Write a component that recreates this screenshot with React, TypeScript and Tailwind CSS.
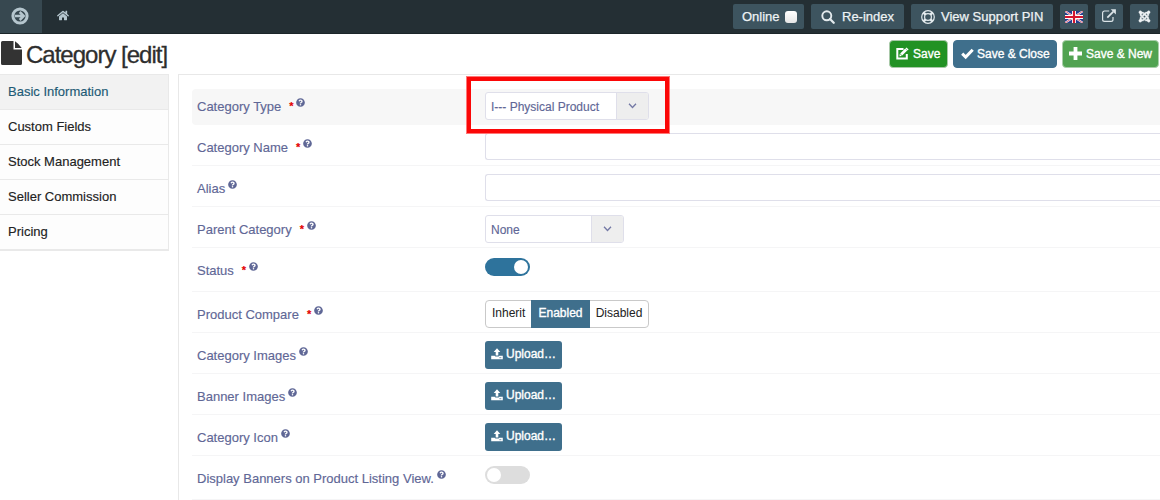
import type { ReactNode } from "react";
import { FaHome, FaJoomla, FaQuestionCircle } from "react-icons/fa";

function ArrowCircleIcon() {
  return (
    <svg className="h-[18px] w-[18px]" viewBox="0 0 18 18" fill="none" stroke="#b5c6ce" aria-hidden>
      <circle cx="9" cy="9" r="7.1" strokeWidth="3" />
      <path d="M4 9h8.500M8.700 5 12.700 9 8.700 13" strokeWidth="2.500" />
    </svg>
  );
}

function FileIcon() {
  return (
    <svg className="mt-[7px] ml-[1px] h-[24px] w-[21px]" viewBox="0 0 21 24" fill="#333" aria-hidden>
      <path d="M1.500 0H12.500V8.500H21V22.500Q21 24 19.500 24H1.500Q0 24 0 22.500V1.500Q0 0 1.500 0Z" />
      <path d="M14 .3Q17.500 2.500 20.700 7H14z" />
    </svg>
  );
}

function SearchIcon() {
  return (
    <svg className="h-[14px] w-[14px]" viewBox="0 0 14 14" fill="none" stroke="#e3eaed" aria-hidden>
      <circle cx="5.800" cy="5.800" r="4.500" strokeWidth="1.900" />
      <path d="m9 9 3.700 3.700" strokeWidth="2.300" strokeLinecap="round" />
    </svg>
  );
}

function LifeRingIcon() {
  return (
    <svg className="h-[14px] w-[14px]" viewBox="0 0 14 14" fill="none" stroke="#e3eaed" aria-hidden>
      <circle cx="7" cy="7" r="6.300" strokeWidth="1.200" />
      <circle cx="7" cy="7" r="3.400" strokeWidth="1.200" />
      <path d="m2.600 2.600 2 2M11.400 2.600l-2 2M2.600 11.400l2-2M11.400 11.400l-2-2" strokeWidth="2.600" />
    </svg>
  );
}

function CheckIcon() {
  return (
    <svg className="h-[12px] w-[13px]" viewBox="0 0 13 12" fill="none" stroke="white" aria-hidden>
      <path d="m1.200 5.600 3.500 3.500 7-7.300" strokeWidth="3" />
    </svg>
  );
}

function PlusIcon() {
  return (
    <svg className="h-[13px] w-[13px]" viewBox="0 0 13 13" fill="none" stroke="white" aria-hidden>
      <path d="M6.500 0v13M0 6.500h13" strokeWidth="3.800" />
    </svg>
  );
}

function EditIcon() {
  return (
    <svg className="h-[13px] w-[13px]" viewBox="0 0 13 13" fill="none" stroke="white" aria-hidden>
      <path d="M7.500 2H1.300v9.500h9.500V7" strokeWidth="2" />
      <path d="m5.200 7.600 5-5" strokeWidth="2.800" />
      <path d="m10.500.4 2.100 2.100-1 1-2.100-2.100zM3.800 6.800 3.400 9.300l2.500-.4z" fill="white" stroke="none" />
    </svg>
  );
}

function ExternalIcon() {
  return (
    <svg className="h-[14px] w-[14px]" viewBox="0 0 14 14" fill="none" stroke="#dce4e8" aria-hidden>
      <path d="M7.200 2H2.500A1.900 1.900 0 0 0 .6 3.900v6.600a1.900 1.900 0 0 0 1.900 1.900h6.600a1.900 1.900 0 0 0 1.900-1.900V8" strokeWidth="1.200" />
      <path d="m5.300 8.700 6-6" strokeWidth="1.800" />
      <path d="M8.700.3H13.900V5.500z" fill="#dce4e8" stroke="none" />
    </svg>
  );
}

function UploadIcon() {
  return (
    <svg className="h-[12px] w-[12px]" viewBox="0 0 12 12" fill="white" aria-hidden>
      <path d="M6 .2 9.300 3.900H7.300V7.400H4.700V3.900H2.700z" />
      <path d="M.2 7.800h3.500l.7.800h3.200l.7-.8h3.500v3.400H.2z" />
      <path d="M8.300 9.700h2" stroke="#3f6f8c" strokeWidth=".7" />
    </svg>
  );
}

function FlagIcon() {
  return (
    <svg className="h-[12px] w-[18px]" viewBox="0 0 18 12" aria-hidden>
      <path d="M0 0h18v12H0z" fill="#243c8d" />
      <path d="m0 0 18 12M18 0 0 12" stroke="#f3f3f8" strokeWidth="1.900" />
      <path d="m0 0 18 12M18 0 0 12" stroke="#d5273e" strokeWidth=".7" />
      <path d="M9 0v12M0 6h18" stroke="white" strokeWidth="4" />
      <path d="M9 0v12M0 6h18" stroke="#d5152e" strokeWidth="2.200" />
    </svg>
  );
}

function Chevron() {
  return (
    <svg className="h-[6px] w-[9px]" viewBox="0 0 9 6" fill="none" stroke="#7479a5" strokeWidth="1.300" aria-hidden>
      <path d="m1 .8 3.500 3.700L8 .8" />
    </svg>
  );
}

function TopButton({ className, children }: { className: string; children: ReactNode }) {
  return (
    <button className={`flex h-[25px] shrink-0 items-center rounded-[2px] bg-[#3d545f] text-[#eef2f4] [-webkit-text-stroke:0.25px_currentColor] ${className}`}>
      {children}
    </button>
  );
}

function ActionButton({ className, children }: { className: string; children: ReactNode }) {
  return (
    <button className={`flex h-[28px] shrink-0 items-center rounded-[4px] border pb-px text-xs text-white [-webkit-text-stroke:0.35px_white] ${className}`}>
      {children}
    </button>
  );
}

function Row({ label, required, tall, first, children }: {
  label: string;
  required?: boolean;
  tall?: boolean;
  first?: boolean;
  children: ReactNode;
}) {
  const box = first ? "h-9 rounded-l-[4px] bg-[#f7f7f7] pt-[3px]" : tall ? "h-11 border-b border-[#f5f5f6] pt-2" : "h-[41px] border-b border-[#f5f5f6] pt-2";
  return (
    <div className={`flex shrink-0 items-start pl-[5px] ${box}`}>
      <div className="flex h-[29px] w-[288px] shrink-0 items-center whitespace-nowrap text-[13px] text-[#5f6796] [-webkit-text-stroke:0.15px_currentColor]">
        <span>{label}</span>
        {required && <span className="ml-[8px] w-[5px] text-[11px] leading-none font-bold text-[#e30000]">*</span>}
        <FaQuestionCircle className={`mb-[8px] h-[9px] w-[9px] ${required ? "ml-[2px]" : "ml-[3px]"}`} />
      </div>
      {children}
    </div>
  );
}

function Select({ value, className }: { value: string; className: string }) {
  return (
    <div className={`flex h-[28px] overflow-hidden rounded-[3px] border border-[#dfdfea] bg-white text-xs text-[#5f6796] [-webkit-text-stroke:0.15px_currentColor] ${className}`}>
      <span className="flex flex-1 items-center pt-px pl-[5px]">{value}</span>
      <span className="flex w-[32px] items-center justify-center border-l border-[#dfdfea] bg-[#eee]"><Chevron /></span>
    </div>
  );
}

function TextInput() {
  return <input className="h-[27px] min-w-0 flex-1 rounded-l-[3px] border border-r-0 border-[#dfdfea] bg-white px-2 text-xs" />;
}

function Upload() {
  return (
    <button className="flex h-[28px] w-[77px] items-center gap-[3px] rounded-[3px] bg-[#3f6f8c] pb-[2px] pl-[6px] text-xs text-white [-webkit-text-stroke:0.35px_white]">
      <UploadIcon />
      Upload…
    </button>
  );
}

const tabs = ["Custom Fields", "Stock Management", "Seller Commission", "Pricing"];

export default function App() {
  return (
    <div className="relative flex h-[500px] w-[1160px] flex-col overflow-hidden bg-white font-['Liberation_Sans',Arial,sans-serif] text-[13px] text-[#222]">
      <header className="flex h-[34px] shrink-0 items-start border-b border-[#1b2529] bg-[#242f34]">
        <div className="flex h-[33px] w-[42px] items-center justify-center bg-[#374850] pr-[3px] pb-[2px]">
          <ArrowCircleIcon />
        </div>
        <FaHome className="mt-[10px] ml-[15px] h-[11px] w-[12px] text-[#b5c6ce]" />
        <div className="mt-1 ml-auto flex gap-[7px] pr-[2px]">
          <TopButton className="w-[71px] gap-[5px] pl-[9px]">
            Online
            <span className="h-[12px] w-[12px] rounded-[3px] bg-gradient-to-b from-white to-[#e6e6e6]" />
          </TopButton>
          <TopButton className="w-[93px] gap-[7px] pl-[10px]">
            <SearchIcon />
            Re-index
          </TopButton>
          <TopButton className="w-[142px] gap-[6px] pl-[10px]">
            <LifeRingIcon />
            View Support PIN
          </TopButton>
          <TopButton className="w-[28px] justify-center pt-[1px]"><FlagIcon /></TopButton>
          <TopButton className="w-[28px] justify-center pb-[2px]"><ExternalIcon /></TopButton>
          <TopButton className="w-[28px] justify-center"><FaJoomla className="h-[13px] w-[13px]" stroke="#eef2f4" strokeWidth="14" /></TopButton>
        </div>
      </header>

      <div className="flex h-[40px] shrink-0 items-start">
        <FileIcon />
        <h1 className="mt-[3px] ml-[4px] text-[24px] leading-[36px] tracking-[-1px] text-[#2e2e2e] [-webkit-text-stroke:0.3px_currentColor]">Category [edit]</h1>
        <div className="mt-[6px] ml-auto flex gap-[5px] pr-px">
          <ActionButton className="w-[59px] gap-[4px] border-[#a9c9a9] bg-[#229224] pl-[6px]"><EditIcon />Save</ActionButton>
          <ActionButton className="w-[104px] gap-[3px] border-[#3f6f8c] bg-[#3f6f8c] pl-[7px]"><CheckIcon />Save &amp; Close</ActionButton>
          <ActionButton className="w-[97px] gap-[4px] border-[#a9cfaa] bg-[#51a351] pl-[6px]"><PlusIcon />Save &amp; New</ActionButton>
        </div>
      </div>

      <div className="flex min-h-0 flex-1">
        <nav className="h-[177px] w-[169px] shrink-0 border-r border-b-2 border-[#e9e9e9] [-webkit-text-stroke:0.15px_currentColor]">
          <div className="flex h-[35px] items-center border-t border-[#e9e9e9] bg-[#f2f2f2] pl-2 text-[#1d5a75]">Basic Information</div>
          {tabs.map((tab) => (
            <div key={tab} className="flex h-[35px] items-center border-t border-[#e9e9e9] bg-[#fdfdfd] pl-2">{tab}</div>
          ))}
        </nav>
        <main className="ml-[9px] flex min-w-0 flex-1 flex-col border-t border-l border-[#e8e8e8] pt-[14px] pl-[13px]">
          <Row label="Category Type" required first>
            <Select value="I--- Physical Product" className="w-[164px]" />
          </Row>
          <Row label="Category Name" required><TextInput /></Row>
          <Row label="Alias"><TextInput /></Row>
          <Row label="Parent Category" required><Select value="None" className="w-[139px]" /></Row>
          <Row label="Status" required tall>
            <div className="mt-[2px] flex h-[18px] w-[45px] items-center justify-end rounded-full bg-[#2e739c] pr-[2px]">
              <span className="h-[14px] w-[14px] rounded-full bg-white" />
            </div>
          </Row>
          <Row label="Product Compare" required>
            <div className="flex h-[28px] w-[164px] rounded-[4px] border border-[#c9c9c9] text-xs leading-[24px] text-[#222]">
              <span className="w-[45px] pl-[6px]">Inherit</span>
              <span className="-my-px w-[59px] bg-[#3f6f8c] pt-px text-center text-white [-webkit-text-stroke:0.35px_white]">Enabled</span>
              <span className="flex-1 text-center">Disabled</span>
            </div>
          </Row>
          <Row label="Category Images"><Upload /></Row>
          <Row label="Banner Images"><Upload /></Row>
          <Row label="Category Icon"><Upload /></Row>
          <Row label="Display Banners on Product Listing View." tall>
            <div className="mt-[2px] flex h-[18px] w-[45px] items-center rounded-full bg-[#ddd] pl-[2px]">
              <span className="h-[14px] w-[14px] rounded-full bg-white" />
            </div>
          </Row>
        </main>
      </div>

      <div className="absolute top-[76px] left-[466px] h-[58px] w-[204px] border-[5px] border-[#fb0707] outline outline-offset-[-1px] outline-[#ff7777]" />
    </div>
  );
}
